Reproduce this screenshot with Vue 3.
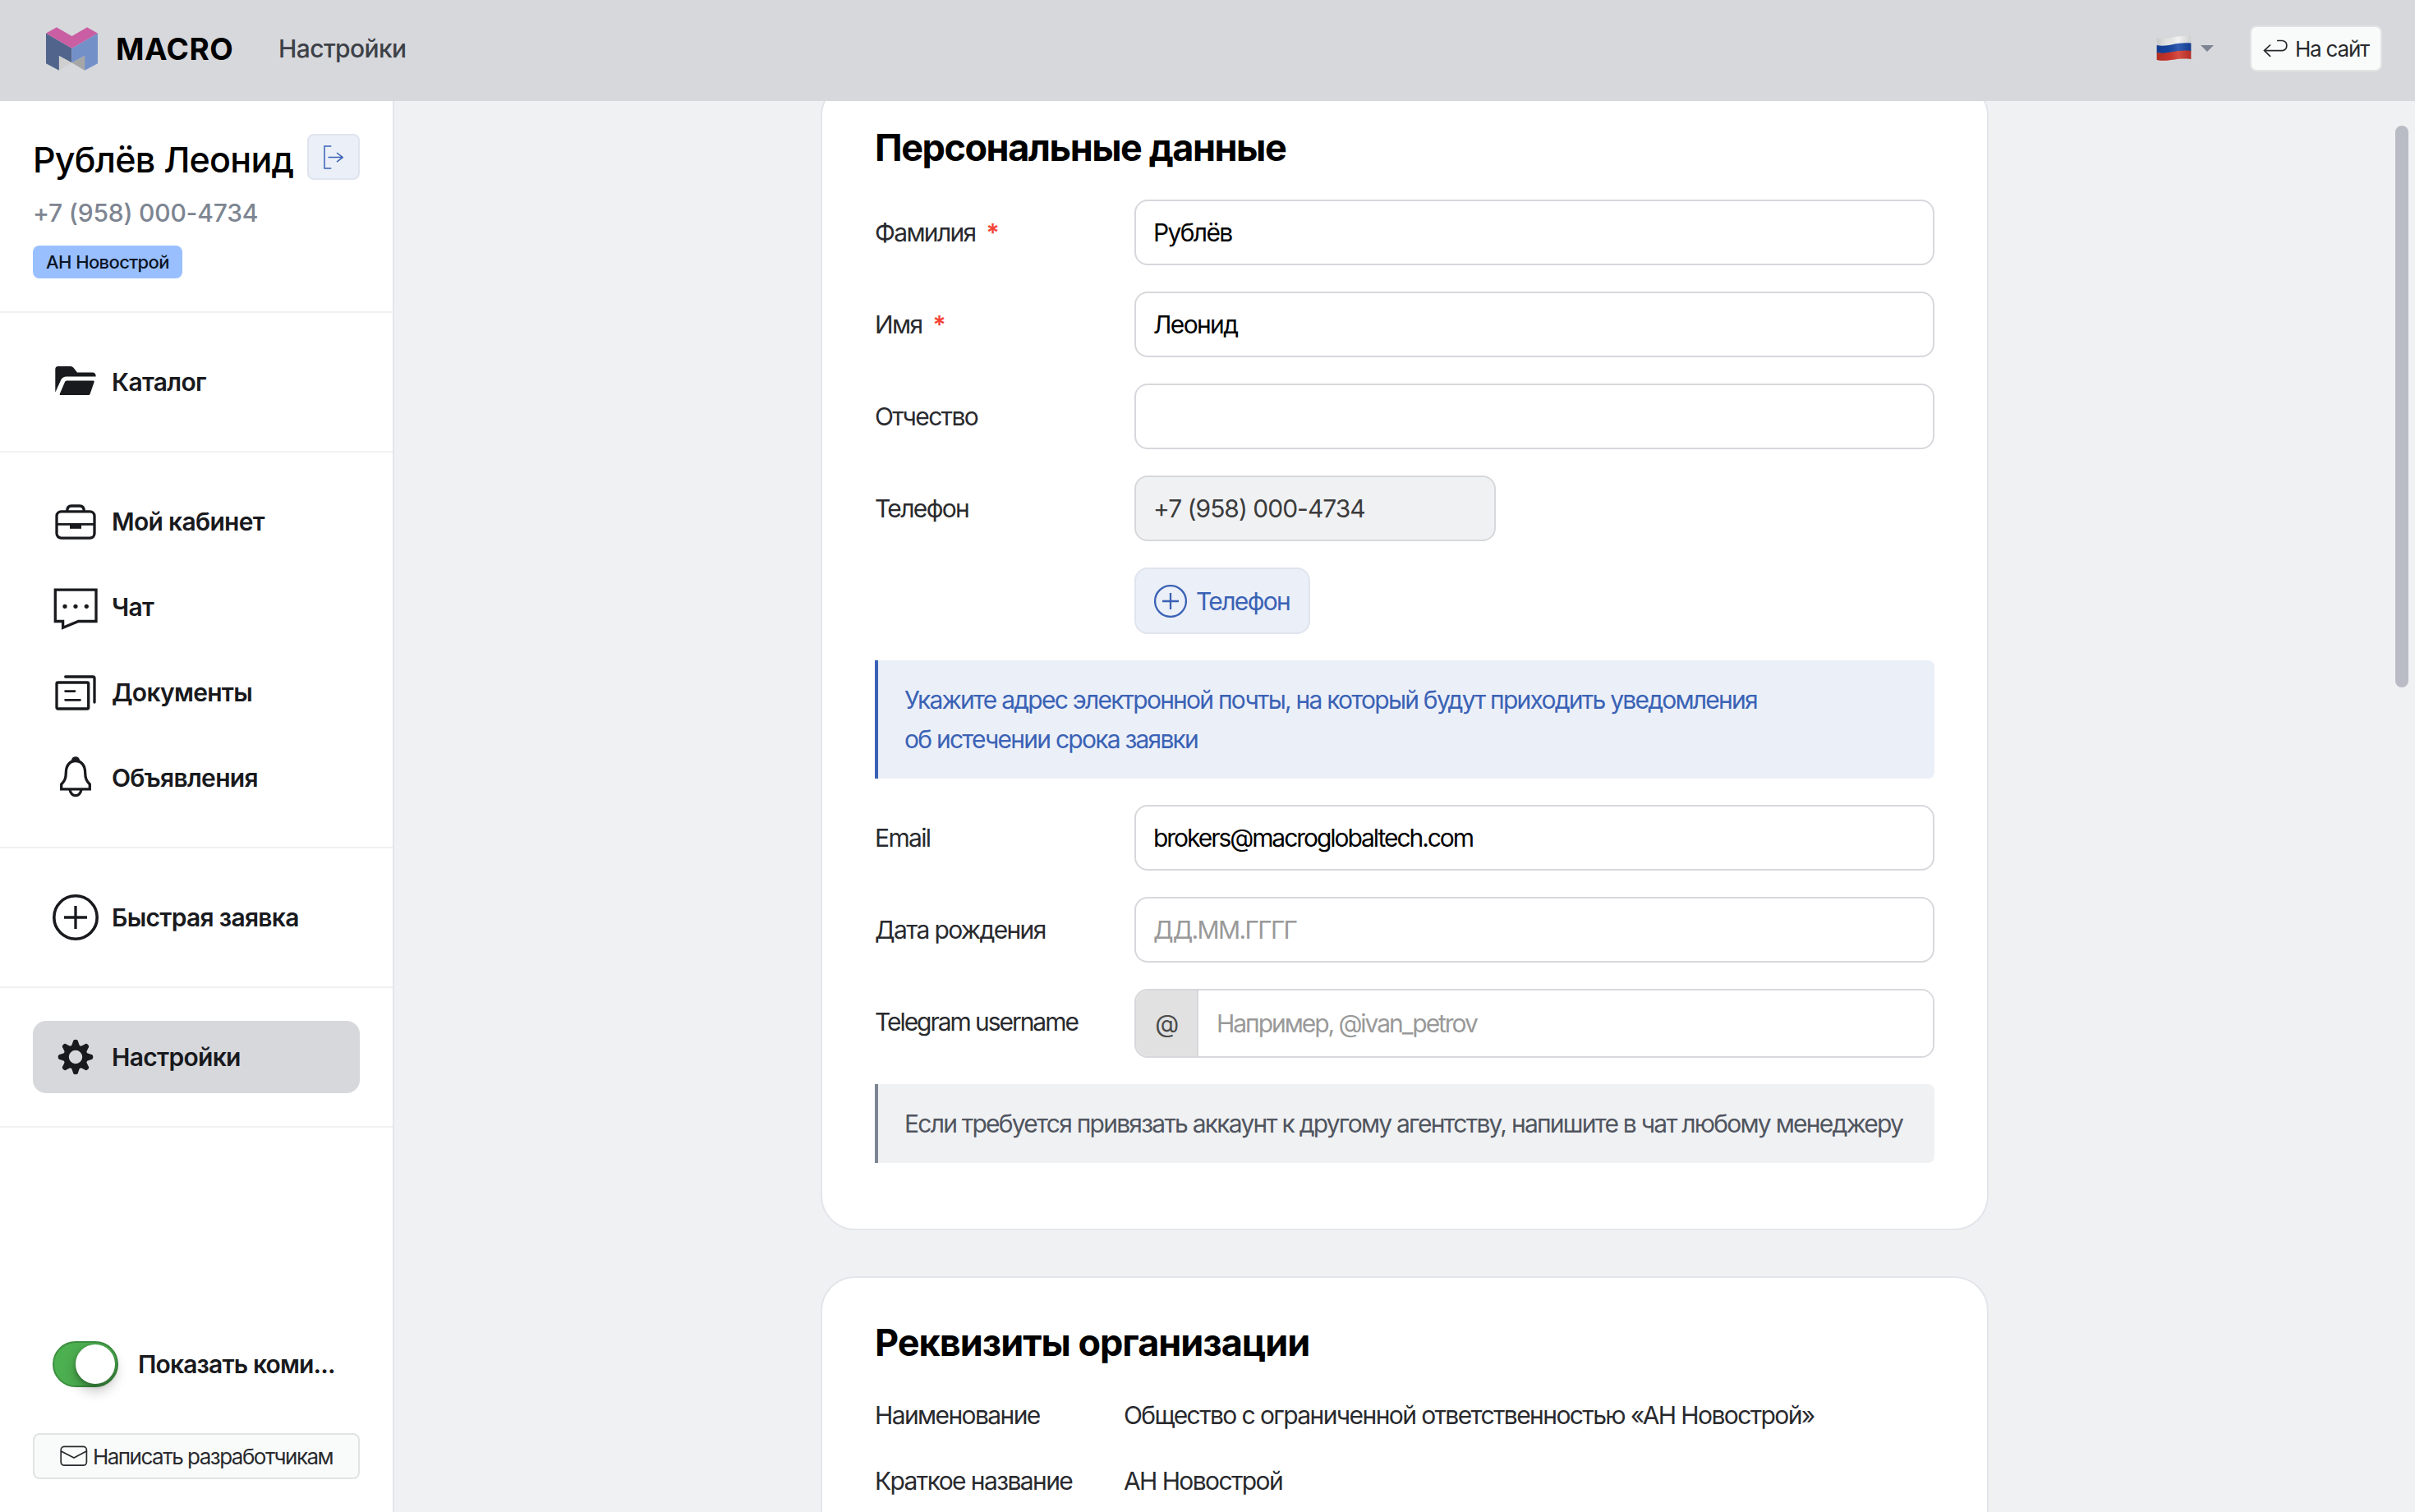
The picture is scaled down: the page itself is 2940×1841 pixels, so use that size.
<template>
  <div class="page">
    <header class="header">
      <svg class="logo" viewBox="168 97 190 159">
        <path fill="#51648b" d="M168 119L263 174V228L216 202V256L168 230Z" />
        <path fill="#7390c8" d="M358 119L263 174V228L310 202V256L358 230Z" />
        <path fill="#c95ea3" d="M168 119L207 97L263 130L319 97L358 119L263 174Z" />
        <path fill="#d0d0d0" d="M216 202L263 228L216 256Z" />
        <path fill="#a6a6a6" d="M310 202L263 228L310 256Z" />
      </svg>
      <span class="brand">MACRO</span>
      <span class="crumb">Настройки</span>

      <div class="lang">
        <svg class="flag" viewBox="196 130 130 96">
          <defs>
            <linearGradient id="flagShade" x1="0" x2="1" y1="0" y2="0">
              <stop offset="0" stop-color="#000" stop-opacity="0.16" />
              <stop offset="0.3" stop-color="#000" stop-opacity="0.06" />
              <stop offset="0.62" stop-color="#fff" stop-opacity="0.12" />
              <stop offset="1" stop-color="#000" stop-opacity="0.14" />
            </linearGradient>
          </defs>
          <path fill="#f0f0f0" d="M198 139C240 149 265 128 324 133V160C265 154 240 175 198 167Z" />
          <path fill="#1646a6" d="M198 166C240 174 265 153 324 158V188C265 182 240 203 198 194Z" />
          <path fill="#d0352b" d="M198 193C240 202 265 181 324 187V217C265 211 240 230 198 220Z" />
          <path fill="url(#flagShade)" d="M198 139C240 149 265 128 324 133V217C265 211 240 230 198 220Z" />
        </svg>
        <span class="caret"></span>
      </div>

      <button class="btn-light btn-site">
        <svg width="32" height="22" viewBox="0 0 32 22" class="line-icon">
          <path d="M17 1.5H24A6.2 6.2 0 0 1 24 13.6H1.5M9 6.5L1.5 13.6L9 20.8" />
        </svg>
        <span>На сайт</span>
      </button>
    </header>

    <div class="body">
      <aside class="sidebar">
        <div class="user">
          <div class="user-row">
            <span class="user-name">Рублёв Леонид</span>
            <button class="btn-logout">
              <svg width="24" height="29" viewBox="0 0 24 29">
                <path d="M9.3 1H1V28H9.3M5.5 14.6H23M16 9L23.2 14.6L16 20.2" />
              </svg>
            </button>
          </div>
          <div class="user-phone">+7 (958) 000-4734</div>
          <div class="user-agency">АН Новострой</div>
        </div>

        <nav v-for="(group, i) in menu" :key="i" class="menu-group">
          <a
              v-for="item in group"
              :key="item.title"
              class="menu-item"
              :class="{ active: item.active }"
          >
            <svg class="menu-icon" viewBox="0 0 56 56" v-html="item.icon"></svg>
            <span>{{ item.title }}</span>
          </a>
        </nav>

        <div class="sidebar-bottom">
          <div class="commission" @click="showCommission = !showCommission">
            <span class="switch" :class="{ on: showCommission }"><i></i></span>
            <span class="commission-text">Показать коми...</span>
          </div>
          <button class="btn-light btn-write">
            <svg width="34" height="26" viewBox="0 0 34 26" class="line-icon">
              <rect x="1.2" y="1.4" width="31.2" height="22.8" rx="4" />
              <path d="M1.4 7L17 15L32.2 7" />
            </svg>
            <span>Написать разработчикам</span>
          </button>
        </div>
      </aside>

      <main class="content">
        <section class="card card-personal">
          <h2>Персональные данные</h2>

          <div v-for="field in nameFields" :key="field.label" class="field">
            <label>{{ field.label }}<b v-if="field.required">*</b></label>
            <input v-model="field.value" type="text" />
          </div>

          <div class="field">
            <label>Телефон</label>
            <div class="phones">
              <input class="phone" type="text" value="+7 (958) 000-4734" readonly />
              <button class="btn-phone">
                <svg width="40" height="40" viewBox="0 0 40 40">
                  <circle cx="20" cy="20" r="18.9" />
                  <path d="M10 20H30M20 10V30" />
                </svg>
                <span>Телефон</span>
              </button>
            </div>
          </div>

          <div class="note note-blue">
            Укажите адрес электронной почты, на который будут приходить уведомления<br />
            об истечении срока заявки
          </div>

          <div class="field">
            <label>Email</label>
            <input v-model="email" class="latin" type="text" />
          </div>
          <div class="field">
            <label>Дата рождения</label>
            <input type="text" placeholder="ДД.ММ.ГГГГ" />
          </div>
          <div class="field">
            <label class="latin">Telegram username</label>
            <div class="input-group">
              <span class="addon">@</span>
              <input class="latin" type="text" placeholder="Например, @ivan_petrov" />
            </div>
          </div>

          <div class="note note-gray">
            Если требуется привязать аккаунт к другому агентству, напишите в чат любому менеджеру
          </div>
        </section>

        <section class="card card-company">
          <h2>Реквизиты организации</h2>
          <div v-for="row in company" :key="row.label" class="info-row">
            <span class="info-label">{{ row.label }}</span>
            <span>{{ row.value }}</span>
          </div>
        </section>

        <div class="scroll-thumb"></div>
      </main>
    </div>
  </div>
</template>

<script setup>
import {ref} from 'vue';

const tooth = 'M-5.5 -12L-3.2 -18.5Q-3 -21.3 0 -21.3Q3 -21.3 3.2 -18.5L5.5 -12Z';
const gearTeeth = [0, 45, 90, 135, 180, 225, 270, 315]
    .map(a => `<path fill="currentColor" d="${tooth}" transform="rotate(${a})"/>`)
    .join('');

const line = 'fill="none" stroke="currentColor" stroke-width="3.3"';

const icons = {
  folder: `<g fill="currentColor">
    <path d="M3.3 40.7V12.5Q3.3 9 6.8 9H22Q24 9 25.5 10.8L30 16.6H48.5Q52.7 16.6 52.7 21.5H17Q12.5 21.5 10.5 25Z"/>
    <path d="M17 26.5H49.6Q51.2 26.5 50.7 28L45.5 43Q45 44 44 44H9.5Q8.2 44 8.8 42.5L15 28Q15.6 26.5 17 26.5Z"/></g>`,
  briefcase: `<g ${line}><rect x="5" y="15.9" width="46" height="32.2" rx="5.5"/>
    <path d="M17.7 15.5C17.7 11 20 9 23 9H33C36 9 38.3 11 38.3 15.5"/>
    <path d="M5 31.4H51" stroke-width="2.8"/></g><path fill="currentColor" d="M21 31.4H35V36.8H21Z"/>`,
  chat: `<path ${line} d="M3.3 7.1H53V45.5H31.5L12.6 53.2V45.5H3.3Z"/>
    <g fill="currentColor"><circle cx="15" cy="27.3" r="2.6"/><circle cx="28" cy="27.3" r="2.6"/><circle cx="41.3" cy="27.3" r="2.6"/></g>`,
  docs: `<g ${line} stroke-linecap="round"><rect x="5" y="16" width="38.7" height="32" rx="1.5"/>
    <path d="M15.7 9H49Q51 9 51 11V40"/><path d="M15.6 26.6H27M15.6 37.3H33.5" stroke-width="2.8"/></g>`,
  bell: `<g ${line}><path d="M10.7 41.9V36C14.5 32 16.3 29 16.3 22C16.3 13 21 7.5 28 7.5S39.7 13 39.7 22C39.7 29 41.5 32 45.3 36V41.9Z"/>
    <path d="M21 42.5C22 47.5 25 49.6 28 49.6S34 47.5 35 42.5"/></g>
    <path fill="currentColor" d="M22.6 7.6Q23.5 2.2 28 2.2T33.4 7.6Z"/>`,
  plus: `<g ${line}><circle cx="28" cy="28" r="26.2" stroke-width="3.6"/><path d="M14 28H42M28 14V42"/></g>`,
  gear: `<g transform="translate(28 28)">${gearTeeth}<circle r="11.5" fill="none" stroke="currentColor" stroke-width="6.6"/></g>`,
};

const menu = [
  [{title: 'Каталог', icon: icons.folder}],
  [
    {title: 'Мой кабинет', icon: icons.briefcase},
    {title: 'Чат', icon: icons.chat},
    {title: 'Документы', icon: icons.docs},
    {title: 'Объявления', icon: icons.bell},
  ],
  [{title: 'Быстрая заявка', icon: icons.plus}],
  [{title: 'Настройки', icon: icons.gear, active: true}],
];

const nameFields = ref([
  {label: 'Фамилия', value: 'Рублёв', required: true},
  {label: 'Имя', value: 'Леонид', required: true},
  {label: 'Отчество', value: '', required: false},
]);

const company = [
  {label: 'Наименование', value: 'Общество с ограниченной ответственностью «АН Новострой»'},
  {label: 'Краткое название', value: 'АН Новострой'},
];

const email = ref('brokers@macroglobaltech.com');
const showCommission = ref(true);
</script>

<style>
body {
  margin: 0;
  overflow: hidden;
}
</style>

<style scoped>
.page {
  height: 1841px;
  display: flex;
  flex-direction: column;
  overflow: hidden;
  font-family: Inter, "Noto Sans", sans-serif;
  font-size: 30px;
  letter-spacing: -1.65px;
  color: #292a2e;
  background: #f0f1f3;
}

.page *,
.page *::before {
  box-sizing: border-box;
}

button,
input {
  font: inherit;
  letter-spacing: inherit;
  outline: none;
}

.latin {
  letter-spacing: -2.05px;
}

/* header */
.header {
  height: 123px;
  flex: none;
  display: flex;
  align-items: center;
  padding: 0 40px 5px 56px;
  background: #d7d8dc;
}

.logo {
  width: 63px;
  height: 53px;
}

.brand {
  width: 143px;
  margin-left: 22px;
  font-size: 37px;
  font-weight: 700;
  letter-spacing: 0.5px;
  color: #000;
}

.crumb {
  margin-left: 55px;
  font-weight: 500;
  letter-spacing: -0.6px;
  color: #3d4047;
}

.lang {
  margin-left: auto;
  margin-right: 44px;
  display: flex;
  align-items: center;
}

.flag {
  width: 43px;
  height: 32px;
}

.caret {
  margin-left: 11px;
  border: 8px solid transparent;
  border-top-color: #7d8592;
  border-bottom: 0;
}

.btn-light {
  height: 56px;
  display: flex;
  align-items: center;
  justify-content: center;
  border: 2px solid #e2e3e4;
  border-radius: 8px;
  background: #f9fbfa;
  color: #292a2e;
  font-size: 26px;
  padding: 0;
  white-space: nowrap;
}

.line-icon {
  flex: none;
  fill: none;
  stroke: #292a2e;
  stroke-width: 1.7;
}

.btn-site {
  width: 161px;
  gap: 7px;
  letter-spacing: -1.2px;
}

/* sidebar */
.body {
  flex: 1;
  min-height: 0;
  display: flex;
}

.sidebar {
  width: 480px;
  flex: none;
  display: flex;
  flex-direction: column;
  background: #fff;
  border-right: 2px solid #e4e5ea;
}

.user {
  height: 258px;
  flex: none;
  padding: 40px 40px 0;
  border-bottom: 2px solid #f0f1f3;
}

.user-row {
  height: 64px;
  display: flex;
  justify-content: space-between;
}

.user-name {
  font-size: 43px;
  line-height: 62px;
  font-weight: 500;
  letter-spacing: -0.75px;
  color: #000;
  white-space: nowrap;
}

.btn-logout {
  width: 64px;
  height: 56px;
  display: flex;
  align-items: center;
  justify-content: center;
  padding: 0;
  border: 2px solid #e0e4ee;
  border-radius: 8px;
  background: #ebeff8;
}

.btn-logout svg {
  fill: none;
  stroke: #3a62b5;
  stroke-width: 1.5;
}

.user-phone {
  margin-top: 12px;
  line-height: 40px;
  font-weight: 500;
  letter-spacing: -0.2px;
  color: #7d8592;
}

.user-agency {
  width: 182px;
  height: 40px;
  margin-top: 20px;
  line-height: 40px;
  text-align: center;
  font-size: 22px;
  font-weight: 500;
  letter-spacing: -0.6px;
  color: #0b1526;
  background: #99bfff;
  border-radius: 8px;
}

.menu-group {
  display: flex;
  flex-direction: column;
  gap: 16px;
  padding: 40px;
  border-bottom: 2px solid #f0f1f3;
}

.menu-item {
  height: 88px;
  display: flex;
  align-items: center;
  gap: 16px;
  padding-left: 24px;
  border-radius: 16px;
  font-weight: 600;
  letter-spacing: -0.7px;
  color: #191a1e;
}

.menu-item.active {
  background: #d7d8dc;
}

.menu-icon {
  width: 56px;
  height: 56px;
  flex: none;
}

.sidebar-bottom {
  margin-top: auto;
  padding: 0 40px 40px;
}

.commission {
  display: flex;
  align-items: center;
  gap: 24px;
  height: 56px;
  margin-bottom: 56px;
  padding-left: 24px;
}

.switch {
  width: 80px;
  height: 56px;
  display: flex;
  padding: 2px;
  border: 2px solid #d7d8dc;
  border-radius: 28px;
  background: #f0f1f4;
}

.switch i {
  width: 48px;
  height: 48px;
  border-radius: 50%;
  background: #fff;
  box-shadow: 0 8px 16px rgba(0, 0, 0, 0.25), 0 2px 5px rgba(0, 0, 0, 0.3);
}

.switch.on {
  justify-content: flex-end;
  border-color: #3d8f40;
  background: #4caf50;
}

.commission-text {
  font-weight: 600;
  letter-spacing: -0.85px;
  color: #191a1e;
  white-space: nowrap;
}

.btn-write {
  width: 398px;
  gap: 6px;
  letter-spacing: -1.5px;
}

/* content */
.content {
  flex: 1;
  position: relative;
  display: flex;
  flex-direction: column;
  align-items: center;
  gap: 56px;
  overflow: hidden;
}

.card {
  width: 1422px;
  flex: none;
  padding: 49px 64px 80px;
  border: 2px solid #e4e5ea;
  border-radius: 42px;
  background: #fff;
}

/* the page is scrolled a little, so the first card goes under the header */
.card-personal {
  margin-top: -24px;
}

h2 {
  margin: 0 0 33px;
  font-size: 45px;
  line-height: 60px;
  font-weight: 700;
  letter-spacing: -1.45px;
  color: #000;
}

.card-company {
  height: 500px;
}

.card-company h2 {
  margin-bottom: 18px;
  letter-spacing: -1px;
}

.field {
  display: flex;
  align-items: flex-start;
  margin-bottom: 32px;
}

.field label {
  width: 316px;
  flex: none;
  line-height: 80px;
}

.field label b {
  margin-left: 13px;
  font-weight: 600;
  color: #f44336;
}

.field input {
  flex: 1;
  min-width: 0;
  height: 80px;
  padding: 0 21px;
  border: 2px solid #d7d8dc;
  border-radius: 16px;
  background: #fff;
  color: #000;
}

.field input::placeholder {
  color: #999;
  opacity: 1;
}

.phones {
  display: flex;
  flex-direction: column;
  align-items: flex-start;
  gap: 32px;
}

.field .phone {
  flex: none;
  width: 440px;
  letter-spacing: -1px;
  background: #f0f1f3;
  color: #3b3b3b;
}

.btn-phone {
  width: 214px;
  height: 81px;
  display: flex;
  align-items: center;
  gap: 11px;
  padding: 0 22px;
  border: 2px solid #e0e4ee;
  border-radius: 16px;
  background: #ebeff8;
  color: #3a62b5;
}

.btn-phone svg {
  flex: none;
  fill: none;
  stroke: #3a62b5;
  stroke-width: 2.3;
}

.input-group {
  flex: 1;
  height: 84px;
  display: flex;
  border: 2px solid #d7d8dc;
  border-radius: 16px;
  overflow: hidden;
}

.addon {
  width: 76px;
  flex: none;
  line-height: 80px;
  text-align: center;
  border-right: 2px solid #d7d8dc;
  background: #e1e1e1;
  color: #4a4a4a;
}

.input-group input {
  padding: 0 22px;
  border: 0;
  border-radius: 0;
}

.note {
  padding: 24px 32px;
  border-left: 4px solid;
  border-radius: 0 8px 8px 0;
  line-height: 48px;
  letter-spacing: -1.76px;
  white-space: nowrap;
}

.note-blue {
  margin-bottom: 32px;
  border-color: #3a62b5;
  background: #ebeff8;
  color: #3a62b5;
}

.note-gray {
  border-color: #7d8592;
  background: #f0f1f3;
  color: #50555f;
}

.info-row {
  display: flex;
  line-height: 80px;
  letter-spacing: -1.6px;
  white-space: nowrap;
}

.info-label {
  width: 303px;
  flex: none;
}

.scroll-thumb {
  position: absolute;
  top: 30px;
  right: 8px;
  width: 16px;
  height: 684px;
  border-radius: 8px;
  background: #b9bcc5;
}
</style>
